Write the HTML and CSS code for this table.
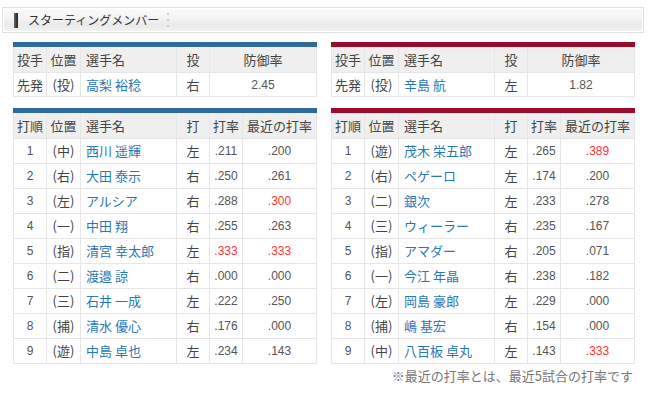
FILE: index.html
```html
<!DOCTYPE html>
<html lang="ja">
<head>
<meta charset="utf-8">
<link rel="stylesheet" href="styles.css">
</head>
<body>
<div class="title">
  <span class="marker"></span>
  <span class="title-text">スターティングメンバー</span>
  <span class="dots"></span>
</div>
<div class="teams">
  <div class="team home">
    <table class="stats">
      <colgroup><col class="c1"><col class="c2"><col class="c3"><col class="c4"><col class="c56"></colgroup>
      <tr class="head"><th>投手</th><th>位置</th><th class="l">選手名</th><th>投</th><th>防御率</th></tr>
      <tr class="prow"><td>先発</td><td>(投)</td><td class="l name">高梨 裕稔</td><td>右</td><td class="num">2.45</td></tr>
    </table>
    <table class="stats">
      <colgroup><col class="c1"><col class="c2"><col class="c3"><col class="c4"><col class="c5"><col class="c6"></colgroup>
      <tr class="head"><th>打順</th><th>位置</th><th class="l">選手名</th><th>打</th><th>打率</th><th>最近の打率</th></tr>
      <tr><td class="num">1</td><td>(中)</td><td class="l name">西川 遥輝</td><td>左</td><td class="num">.211</td><td class="num">.200</td></tr>
      <tr><td class="num">2</td><td>(右)</td><td class="l name">大田 泰示</td><td>右</td><td class="num">.250</td><td class="num">.261</td></tr>
      <tr><td class="num">3</td><td>(左)</td><td class="l name">アルシア</td><td>右</td><td class="num">.288</td><td class="num red">.300</td></tr>
      <tr><td class="num">4</td><td>(一)</td><td class="l name">中田 翔</td><td>右</td><td class="num">.255</td><td class="num">.263</td></tr>
      <tr><td class="num">5</td><td>(指)</td><td class="l name">清宮 幸太郎</td><td>左</td><td class="num red">.333</td><td class="num red">.333</td></tr>
      <tr><td class="num">6</td><td>(二)</td><td class="l name">渡邉 諒</td><td>右</td><td class="num">.000</td><td class="num">.000</td></tr>
      <tr><td class="num">7</td><td>(三)</td><td class="l name">石井 一成</td><td>左</td><td class="num">.222</td><td class="num">.250</td></tr>
      <tr><td class="num">8</td><td>(捕)</td><td class="l name">清水 優心</td><td>右</td><td class="num">.176</td><td class="num">.000</td></tr>
      <tr><td class="num">9</td><td>(遊)</td><td class="l name">中島 卓也</td><td>左</td><td class="num">.234</td><td class="num">.143</td></tr>
    </table>
  </div>
  <div class="team away">
    <table class="stats">
      <colgroup><col class="c1"><col class="c2"><col class="c3"><col class="c4"><col class="c56"></colgroup>
      <tr class="head"><th>投手</th><th>位置</th><th class="l">選手名</th><th>投</th><th>防御率</th></tr>
      <tr class="prow"><td>先発</td><td>(投)</td><td class="l name">辛島 航</td><td>左</td><td class="num">1.82</td></tr>
    </table>
    <table class="stats">
      <colgroup><col class="c1"><col class="c2"><col class="c3"><col class="c4"><col class="c5"><col class="c6"></colgroup>
      <tr class="head"><th>打順</th><th>位置</th><th class="l">選手名</th><th>打</th><th>打率</th><th>最近の打率</th></tr>
      <tr><td class="num">1</td><td>(遊)</td><td class="l name">茂木 栄五郎</td><td>左</td><td class="num">.265</td><td class="num red">.389</td></tr>
      <tr><td class="num">2</td><td>(右)</td><td class="l name">ペゲーロ</td><td>左</td><td class="num">.174</td><td class="num">.200</td></tr>
      <tr><td class="num">3</td><td>(二)</td><td class="l name">銀次</td><td>左</td><td class="num">.233</td><td class="num">.278</td></tr>
      <tr><td class="num">4</td><td>(三)</td><td class="l name">ウィーラー</td><td>右</td><td class="num">.235</td><td class="num">.167</td></tr>
      <tr><td class="num">5</td><td>(指)</td><td class="l name">アマダー</td><td>右</td><td class="num">.205</td><td class="num">.071</td></tr>
      <tr><td class="num">6</td><td>(一)</td><td class="l name">今江 年晶</td><td>右</td><td class="num">.238</td><td class="num">.182</td></tr>
      <tr><td class="num">7</td><td>(左)</td><td class="l name">岡島 豪郎</td><td>左</td><td class="num">.229</td><td class="num">.000</td></tr>
      <tr><td class="num">8</td><td>(捕)</td><td class="l name">嶋 基宏</td><td>右</td><td class="num">.154</td><td class="num">.000</td></tr>
      <tr><td class="num">9</td><td>(中)</td><td class="l name">八百板 卓丸</td><td>左</td><td class="num">.143</td><td class="num red">.333</td></tr>
    </table>
  </div>
</div>
<p class="note">※最近の打率とは、最近5試合の打率です</p>
</body>
</html>
```

FILE: styles.css
```css
html, body {
  margin: 0;
  padding: 0;
  background: #fff;
}
body {
  font-family: "Noto Sans CJK JP", "Liberation Sans", sans-serif;
  color: #333;
  width: 650px;
  height: 395px;
  overflow: hidden;
}
.title {
  margin: 7px 6px 0 2px;
  height: 24px;
  border: 1px solid #e0e0e0;
  background: linear-gradient(#fbfbfb 0%, #f3f3f3 45%, #e9e9e9 70%, #f2f2f2 100%);
  display: flex;
  align-items: center;
  box-shadow: inset 0 0 0 1px #fff;
}
.marker {
  width: 4px;
  height: 15px;
  margin-left: 11px;
  background: linear-gradient(90deg, #666, #222);
}
.title-text {
  margin-left: 10px;
  font-size: 12px;
  line-height: 16px;
  color: #333;
}
.dots {
  width: 2px;
  height: 14px;
  margin-left: 8px;
  background: repeating-linear-gradient(#cfcfcf 0 2px, transparent 2px 6px);
}
.teams {
  display: grid;
  grid-template-columns: 303px 303px;
  column-gap: 15px;
  padding: 9px 0 0 13px;
}
.team {
  display: flex;
  flex-direction: column;
  gap: 11px;
}
.stats {
  width: 303px;
  table-layout: fixed;
  border-collapse: collapse;
  font-size: 13px;
}
.home .stats { border-top: 5px solid #2f6a9c; }
.away .stats { border-top: 5px solid #9b0b2b; }
.c1 { width: 33px; }
.c2 { width: 34px; }
.c3 { width: 96px; }
.c4 { width: 33px; }
.c5 { width: 33px; }
.c6 { width: 74px; }
.c56 { width: 107px; }
.stats th, .stats td {
  border: 1px solid #e6e6e6;
  padding: 0;
  text-align: center;
  font-weight: normal;
  line-height: 16px;
  white-space: nowrap;
  overflow: hidden;
}
.stats th {
  background: #efefef;
  height: 25px;
  color: #444;
}
.stats td {
  height: 24px;
  color: #444;
}
.stats .prow td { height: 23px; }
.stats .l {
  text-align: left;
  padding-left: 5px;
}
.stats .name {
  color: #2a77b8;
}
.stats .num {
  font-family: "Liberation Sans", Arial, sans-serif;
  font-size: 12px;
  color: #555;
}
.stats .red {
  color: #ff3333;
}
.note {
  margin: 4px 0 0 0;
  padding-right: 17px;
  text-align: right;
  font-size: 13px;
  line-height: 16px;
  color: #777;
}
```
